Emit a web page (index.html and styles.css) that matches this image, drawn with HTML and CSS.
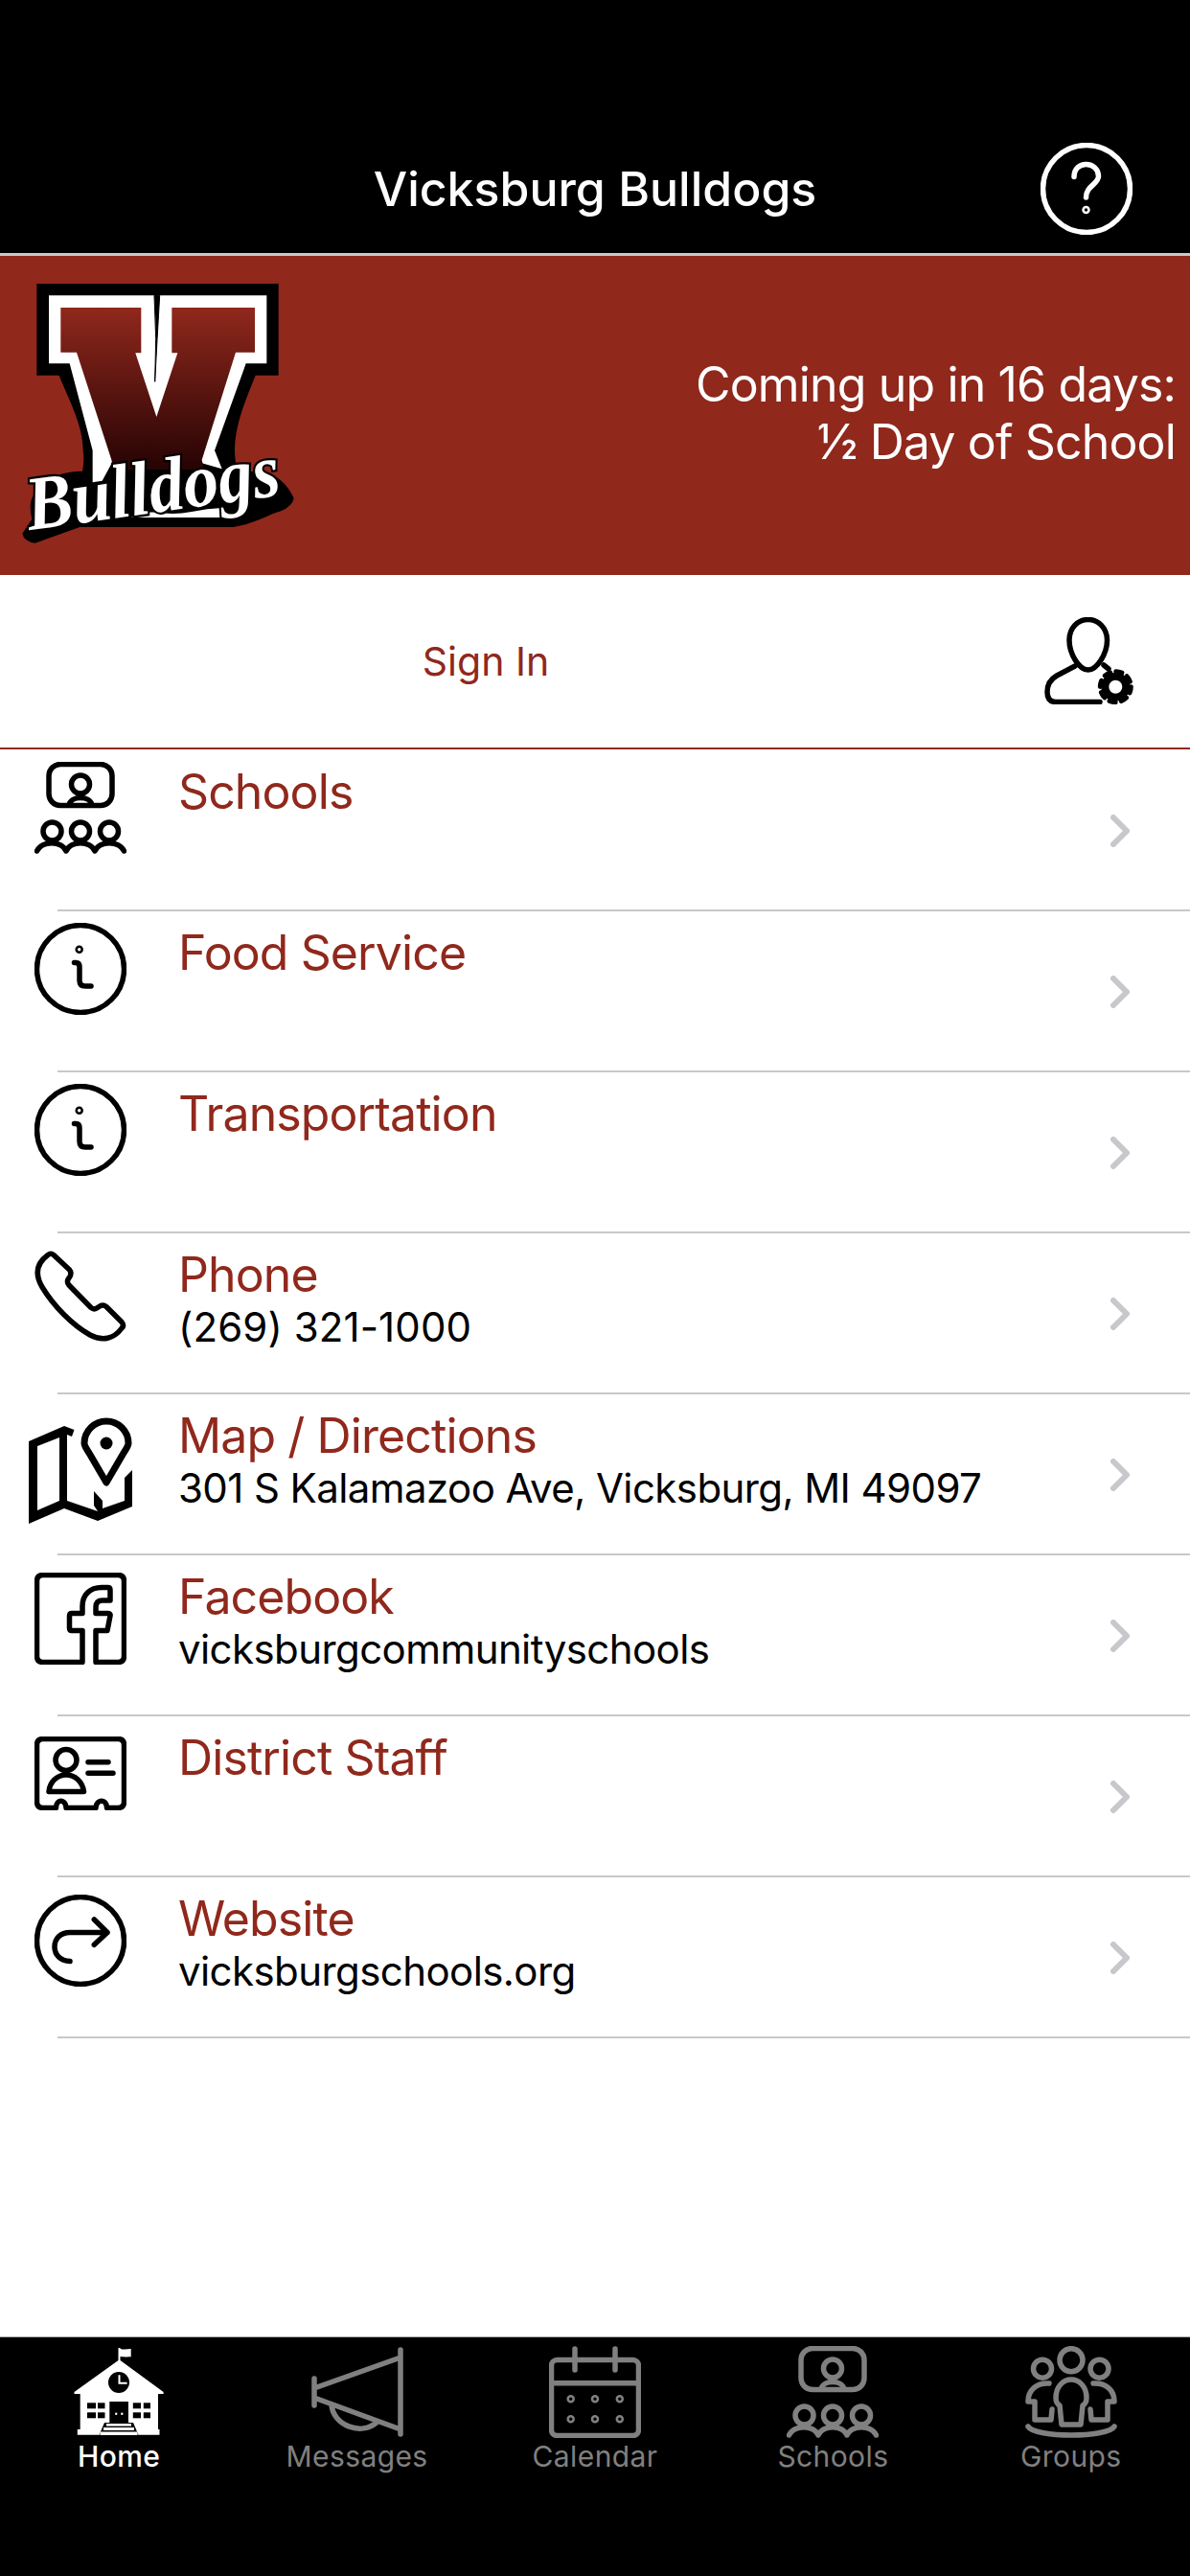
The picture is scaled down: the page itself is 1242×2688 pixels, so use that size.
FILE: index.html
```html
<!DOCTYPE html>
<html lang="en">
<head>
	<meta charset="UTF-8">
	<title>Vicksburg Bulldogs</title>
	<link rel="stylesheet" href="styles.css">
</head>
<body>
	<svg class="defs" width="0" height="0">
		<symbol id="i-schools" viewBox="0 0 96 96">
			<rect x="15" y="2.5" width="66" height="43" rx="12"/>
			<circle cx="48" cy="23.5" r="9.5"/>
			<path d="M36 45C38 35 58 35 60 45"/>
			<circle cx="18.5" cy="72.5" r="9.5"/>
			<circle cx="48" cy="72.5" r="9.5"/>
			<circle cx="78" cy="72.5" r="9.5"/>
			<path d="M2.5 93C8 82 28 82 33 93C38 82 58 82 63 93C68 82 88 82 93.5 93"/>
		</symbol>
		<symbol id="i-info" viewBox="0 0 96 96">
			<circle cx="48" cy="48" r="45.5"/>
			<circle cx="46.7" cy="27.7" r="3" stroke-width="2.5"/>
			<path d="M41.5 41.5H43Q47 41.5 47 46V60Q47 66 53 66H59"/>
		</symbol>
	</svg>

	<header class="top">
		<span></span>
		<h1 class="top-title">Vicksburg Bulldogs</h1>
		<svg class="ico help" viewBox="0 0 96 96">
			<circle cx="48" cy="48" r="45.5"/>
			<path d="M35 35.5C35 27 41 22.5 47.5 22.5C55 22.5 60.5 28 60.5 35C60.5 43 47.5 45 47.5 57"/>
			<circle cx="47.5" cy="70" r="3" stroke-width="2.5"/>
		</svg>
	</header>

	<section class="banner">
		<svg class="logo" viewBox="0 0 990 960">
			<defs>
				<linearGradient id="vfill" x1="0" y1="150" x2="0" y2="650" gradientUnits="userSpaceOnUse">
					<stop offset="0" stop-color="#90281c"/>
					<stop offset="1" stop-color="#280404"/>
				</linearGradient>
			</defs>
			<path fill="#000" d="M115 78H872V365H800C770 440 735 520 735 600Q735 640 745 660L850 675C880 690 905 715 920 750Q915 775 880 790C840 800 800 830 730 840H250Q180 865 110 890Q75 885 70 860L100 815Q90 770 100 750C120 700 180 665 258 665Q265 630 260 600C260 520 215 440 185 365H115Z"/>
			<path fill="#fff" d="M153 115H835V328H770L672 600L695 658L632 640H350L320 695L290 700V600L218 328H153Z"/>
			<path fill="url(#vfill)" d="M190 153H442V295H424L490 495L556 295H538V153H798V293H738L632 630L640 660H350V632L240 293H190Z"/>
			<path fill="#000" d="M483 115H500Q492 250 485 385Q492 250 483 115Z" stroke="#000" stroke-width="3"/>
			<path fill="#fff" d="M412 810L425 798Q470 790 510 796T600 792T695 780V810Z"/>
			<text class="logo-word" x="92" y="850" textLength="800" lengthAdjust="spacingAndGlyphs" transform="rotate(-8 92 850)">Bulldogs</text>
		</svg>
		<p class="banner-text">Coming up in 16 days:<br>½ Day of School</p>
	</section>

	<div class="signin">
		<a class="signin-link">Sign In</a>
		<svg class="ico user" viewBox="0 0 93 91">
			<path d="M45.7 2.5C35 2.5 26 11 26 24C26 38 36 55 45.7 55C55 55 65.5 38 65.5 24C65.5 11 56 2.5 45.7 2.5Z"/>
			<path d="M32 51L13 61C6 65 3 70 3 78C3 85 6 88.5 12 88.5H58"/>
			<path d="M62 50L67 54"/>
			<circle cx="74.3" cy="72.7" r="11" stroke-width="8"/>
			<circle cx="74.3" cy="72.7" r="16" stroke-width="5" stroke-dasharray="6.28 6.28"/>
		</svg>
	</div>

	<main class="list">
		<a class="row">
			<svg class="ico row-ico"><use href="#i-schools"/></svg>
			<div class="row-text"><div class="row-title">Schools</div></div>
			<svg class="chev" viewBox="0 0 20 34"><path d="M3 3L17 17L3 31"/></svg>
		</a>
		<div class="sep"></div>
		<a class="row">
			<svg class="ico row-ico"><use href="#i-info"/></svg>
			<div class="row-text"><div class="row-title">Food Service</div></div>
			<svg class="chev" viewBox="0 0 20 34"><path d="M3 3L17 17L3 31"/></svg>
		</a>
		<div class="sep"></div>
		<a class="row">
			<svg class="ico row-ico"><use href="#i-info"/></svg>
			<div class="row-text"><div class="row-title">Transportation</div></div>
			<svg class="chev" viewBox="0 0 20 34"><path d="M3 3L17 17L3 31"/></svg>
		</a>
		<div class="sep"></div>
		<a class="row row-two">
			<svg class="ico row-ico" viewBox="0 0 96 96">
				<path d="M14 4.5Q17 2 20 4.5L36.5 20Q39 23 37 27L35 30Q33.5 33 36 36L59 59.5Q62 62 65 60L69 57.5Q72 56 75 58.5L91 74.5Q94 78 91 81C83 92 71 95 58 88C40 78 20 58 8 38C1 26 1 14 14 4.5Z"/>
			</svg>
			<div class="row-text"><div class="row-title">Phone</div><div class="row-sub row-num">(269) 321-1000</div></div>
			<svg class="chev" viewBox="0 0 20 34"><path d="M3 3L17 17L3 31"/></svg>
		</a>
		<div class="sep"></div>
		<a class="row row-two">
			<svg class="ico row-ico ico-map" viewBox="0 0 108 111">
				<path class="solid" fill-rule="evenodd" d="M0 25L37 9L47.5 13L45 20L40 18V87L72 98L68 92V77L77 87V95L100 87V63L108 55V93L72 108L37 95L0 111ZM9 30V97L32 87V21Z"/>
				<path stroke-width="7" d="M81 68L63.5 38C60 32 58 30 58 27A23 23 0 1 1 104 27C104 30 102 32 98.5 38Z"/>
				<circle class="solid" cx="81" cy="27" r="6.5"/>
			</svg>
			<div class="row-text"><div class="row-title">Map / Directions</div><div class="row-sub">301 S Kalamazoo Ave, Vicksburg, MI 49097</div></div>
			<svg class="chev" viewBox="0 0 20 34"><path d="M3 3L17 17L3 31"/></svg>
		</a>
		<div class="sep"></div>
		<a class="row row-two">
			<svg class="ico row-ico" viewBox="0 0 96 96">
				<path d="M50 93.5H9Q2.5 93.5 2.5 87V9Q2.5 2.5 9 2.5H87Q93.5 2.5 93.5 9V87Q93.5 93.5 87 93.5H64V60.5H76L79 45Q79.5 42.5 77 42.5H64V36Q64 29 71 29H79V18Q79 15.5 76.5 15.5H70C58 15.5 50 23 50 35V42.5H39Q36.5 42.5 36.5 45V58Q36.5 60.5 39 60.5H50Z"/>
			</svg>
			<div class="row-text"><div class="row-title">Facebook</div><div class="row-sub">vicksburgcommunityschools</div></div>
			<svg class="chev" viewBox="0 0 20 34"><path d="M3 3L17 17L3 31"/></svg>
		</a>
		<div class="sep"></div>
		<a class="row">
			<svg class="ico row-ico ico-staff" viewBox="0 0 96 77">
				<path d="M9 2.5H87Q93.5 2.5 93.5 9V68Q93.5 74.5 87 74.5H75.5V74C75 65 65 65 64 74V74.5H33V74C32 65 23 65 22.5 74V74.5H9Q2.5 74.5 2.5 68V9Q2.5 2.5 9 2.5Z"/>
				<circle cx="33" cy="24.5" r="11"/>
				<path d="M15 57.5H51.5C50 47 42 40 33 40C24 40 16 47 15 57.5Z"/>
				<path d="M56 26.7H77M56 38.3H82"/>
			</svg>
			<div class="row-text"><div class="row-title">District Staff</div></div>
			<svg class="chev" viewBox="0 0 20 34"><path d="M3 3L17 17L3 31"/></svg>
		</a>
		<div class="sep"></div>
		<a class="row row-two">
			<svg class="ico row-ico" viewBox="0 0 96 96">
				<circle cx="48" cy="48" r="45.5"/>
				<path d="M62.3 26L76 39.5L62.3 52.3M76 39.5H37C27 39.5 21 46 21 54.5C21 63 27 69 37 69.5"/>
			</svg>
			<div class="row-text"><div class="row-title">Website</div><div class="row-sub">vicksburgschools.org</div></div>
			<svg class="chev" viewBox="0 0 20 34"><path d="M3 3L17 17L3 31"/></svg>
		</a>
		<div class="sep"></div>
	</main>

	<nav class="tabs">
		<a class="tab tab-on">
			<svg class="tab-ico" viewBox="0 0 96 96">
				<g class="home-white">
					<path d="M48.5 14.3L94.6 48V50H89V87H90.5V92.7H4.8V87H7.7V50H1.5V48Z"/>
					<path d="M47.5 2H49.5V15H47.5Z"/>
					<path d="M49 2.7C53 4 56 3.5 60.7 3V11.3C56 11.5 53 11.5 49 11Z"/>
				</g>
				<g class="home-black">
					<circle cx="48" cy="38" r="11"/>
					<rect x="15" y="59.3" width="9" height="6"/><rect x="26" y="59.3" width="7.5" height="6"/>
					<rect x="15" y="69.3" width="9" height="6"/><rect x="26" y="69.3" width="7.5" height="6"/>
					<rect x="62.8" y="59.3" width="8.2" height="6"/><rect x="73.8" y="59.3" width="7.2" height="6"/>
					<rect x="62.8" y="69.3" width="8.2" height="6"/><rect x="73.8" y="69.3" width="7.2" height="6"/>
					<rect x="38.3" y="58" width="19.7" height="24"/>
					<path d="M33 80H63L68.5 92.7H27.5Z"/>
				</g>
				<g class="home-white">
					<path d="M47.5 30.3H49.5V37.7H56.6V39.7H47.5Z"/>
					<circle cx="45.2" cy="70.7" r="1.2"/><circle cx="51.3" cy="70.7" r="1.2"/>
					<rect x="35" y="81" width="26" height="2.6"/><rect x="32" y="85" width="32" height="3"/><rect x="28.5" y="89.5" width="39" height="3.5"/>
				</g>
			</svg>
			<span>Home</span>
		</a>
		<a class="tab">
			<svg class="tab-ico" viewBox="0 0 96 96">
				<path d="M93 4V92M3 34V62M3 44L93 12M3 54L93 87M21 61C22 82 52 95 69 79"/>
			</svg>
			<span>Messages</span>
		</a>
		<a class="tab">
			<svg class="tab-ico" viewBox="0 0 96 96">
				<rect x="2.5" y="14.5" width="91" height="79" rx="6"/>
				<path d="M2.5 38.7H93.5M27 3V25M69 3V25"/>
				<g stroke-width="2.5">
					<circle cx="22.7" cy="55.3" r="3"/><circle cx="48" cy="55.3" r="3"/><circle cx="73.8" cy="55.3" r="3"/>
					<circle cx="22.7" cy="76.3" r="3"/><circle cx="48" cy="76.3" r="3"/><circle cx="73.8" cy="76.3" r="3"/>
				</g>
			</svg>
			<span>Calendar</span>
		</a>
		<a class="tab">
			<svg class="tab-ico"><use href="#i-schools"/></svg>
			<span>Schools</span>
		</a>
		<a class="tab">
			<svg class="tab-ico" viewBox="0 0 96 96">
				<circle cx="48" cy="14.7" r="12"/>
				<path d="M38 82L36 62Q32 60 32 54C32 42 40 35 48 35C56 35 64 42 64 54Q64 60 60 62L58 82Z"/>
				<circle cx="18" cy="23.7" r="9.5"/>
				<circle cx="77.5" cy="23.7" r="9.5"/>
				<path d="M25 39C12 38 3 46 3 58H10V77H27L28 66"/>
				<path d="M71 39C84 38 93 46 93 58H86V77H69L68 66"/>
				<path d="M3 84C10 96 86 96 93 84"/>
			</svg>
			<span>Groups</span>
		</a>
	</nav>
</body>
</html>
```

FILE: styles.css
```css
*{margin:0;padding:0;box-sizing:border-box;}
html,body{width:1242px;height:2688px;overflow:hidden;}
body{display:flex;flex-direction:column;background:#fff;font-family:Inter,"Liberation Sans",sans-serif;}
.defs{position:absolute;}

.ico,.tab-ico{fill:none;stroke:currentColor;stroke-width:5.5;stroke-linecap:round;stroke-linejoin:round;flex:none;}
.solid{fill:currentColor;stroke:none;}

/* header */
.top{height:267px;padding:149px 60px 0;display:grid;grid-template-columns:1fr auto 1fr;align-items:start;background:#000;color:#fff;border-bottom:3px solid #c8c8c8;}
.top-title{font-size:50px;line-height:96px;font-weight:500;}
.help{width:96px;height:96px;justify-self:end;}

/* banner */
.banner{height:333px;display:flex;justify-content:space-between;align-items:flex-start;background:#90281c;padding-right:15px;}
.logo{width:330px;height:320px;margin-top:3px;flex:none;}
.logo-word{font-family:"Liberation Serif",serif;font-style:italic;font-weight:bold;font-size:240px;fill:#fff;stroke:#000;stroke-width:14px;paint-order:stroke;}
.banner-text{margin-top:104px;font-size:50px;line-height:60px;letter-spacing:-.85px;text-align:right;color:#fff;}

/* sign in */
.signin{height:182px;display:flex;align-items:flex-start;border-bottom:2px solid #90281c;}
.signin-link{width:1014px;margin-top:60px;font-size:41px;line-height:60px;text-align:center;color:#90281c;}
.user{width:93px;height:91px;margin:44px 0 0 76px;color:#000;}

/* list */
.list{flex:1;padding-top:1px;}
.row{height:166px;display:flex;align-items:flex-start;padding-left:36px;color:#000;}
.row-ico{width:96px;height:96px;margin-top:12px;}
.row-two .row-ico{margin-top:18px;}
.ico-map{width:108px;height:111px;margin:24px -6px 0;}
.row-two .ico-map{margin-top:24px;}
.ico-staff{height:77px;margin-top:21px;}
.row-text{flex:1;padding:13px 0 0 54px;}
.row-title{font-size:50px;line-height:60px;letter-spacing:-.9px;color:#90281c;}
.row-sub{font-size:42px;line-height:50px;letter-spacing:-.58px;color:#000;}
.row-num{letter-spacing:.1px;}
.chev{width:20px;height:34px;margin:67px 63px 0 0;flex:none;fill:none;stroke:#c7c7cc;stroke-width:6;stroke-linecap:round;stroke-linejoin:round;}
.sep{height:2px;margin-left:60px;background:#c8c8c8;}

/* tabs */
.tabs{height:250px;display:grid;grid-template-columns:repeat(5,1fr);background:#000;border-top:1px solid #aaa;padding-top:9px;}
.tab{display:flex;flex-direction:column;align-items:center;color:#808080;}
.tab-on{color:#fff;}
.tab-ico{width:96px;height:96px;}
.tab span{font-size:30px;line-height:40px;margin-top:-1px;letter-spacing:.4px;}
.tab-on span{font-weight:500;}
.home-white{fill:#fff;stroke:none;}
.home-black{fill:#000;stroke:none;}
```
